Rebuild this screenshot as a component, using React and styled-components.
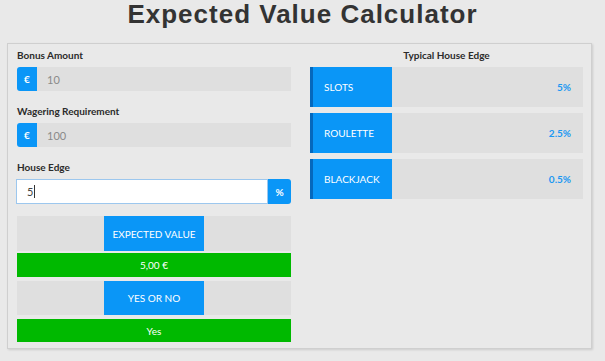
import styled, { createGlobalStyle } from "styled-components";

const GlobalStyle = createGlobalStyle`
  html, body {
    margin: 0;
    padding: 0;
    background: #e9e9e9;
    font-family: Lato, "Open Sans", sans-serif;
  }
`;

const Page = styled.div`
  width: 605px;
  height: 361px;
  overflow: hidden;
`;

const Title = styled.h1`
  margin: 0;
  height: 38px;
  line-height: 29px;
  text-align: center;
  font-family: "Liberation Sans", Arial, sans-serif;
  font-size: 26px;
  font-weight: 700;
  letter-spacing: 1px;
  color: #333;
`;

const Panel = styled.div`
  margin: 5px 0 0 7px;
  width: 585px;
  height: 306px;
  box-sizing: border-box;
  border: 1px solid #cfcfcf;
  box-shadow: 1px 1px 2px rgba(0, 0, 0, 0.12);
  padding: 3px 9px 0 9px;
  display: grid;
  grid-template-columns: 274px 273px;
  column-gap: 19px;
  align-items: start;
`;

const Column = styled.div`
  display: flex;
  flex-direction: column;
`;

const Label = styled.div`
  height: 16px;
  line-height: 16px;
  font-size: 10px;
  font-weight: 700;
  color: #2b2b2b;
  margin-bottom: 4px;
  text-align: ${({ $center }) => ($center ? "center" : "left")};
`;

const Field = styled.div`
  margin-bottom: 12px;
`;

const InputGroup = styled.div`
  display: flex;
  height: ${({ $h }) => $h || 24}px;
`;

const Addon = styled.div`
  width: ${({ $w }) => $w || 20}px;
  display: flex;
  align-items: center;
  justify-content: center;
  background: #0a96f7;
  color: #fff;
  font-size: 10px;
  font-weight: 700;
  border-radius: ${({ $right }) => ($right ? "0 3px 3px 0" : "3px 0 0 3px")};
`;

const Input = styled.div`
  flex: 1;
  display: flex;
  align-items: center;
  padding-left: 10px;
  font-size: 11px;
  box-sizing: border-box;
  background: ${({ $active }) => ($active ? "#fff" : "#dfdfdf")};
  border: ${({ $active }) => ($active ? "1px solid #9cc7ee" : "none")};
  margin-left: ${({ $active }) => ($active ? "-1px" : "0")};
  color: ${({ $active }) => ($active ? "#444" : "#8a8a8a")};
`;

const Caret = styled.span`
  display: inline-block;
  width: 1px;
  height: 13px;
  background: #333;
  margin-left: 1px;
`;

const ButtonRow = styled.div`
  display: flex;
  justify-content: center;
  background: #dfdfdf;
  height: ${({ $h }) => $h}px;
  margin-top: ${({ $mt }) => $mt}px;
`;

const Button = styled.div`
  width: 100px;
  display: flex;
  align-items: center;
  justify-content: center;
  background: #0a96f7;
  color: #fff;
  font-size: 10px;
  text-transform: uppercase;
`;

const Result = styled.div`
  display: flex;
  align-items: center;
  justify-content: center;
  background: #00b900;
  color: #fff;
  font-size: 10px;
  height: ${({ $h }) => $h}px;
  margin-top: ${({ $mt }) => $mt}px;
`;

const EdgeList = styled.div`
  display: flex;
  flex-direction: column;
  gap: 6px;
`;

const EdgeRow = styled.div`
  display: flex;
  height: 40px;
  background: #dfdfdf;
`;

const EdgeName = styled.div`
  width: 82px;
  display: flex;
  align-items: center;
  padding-left: 11px;
  box-sizing: border-box;
  background: #0a96f7;
  border-left: 3px solid #0568bd;
  color: #fff;
  font-size: 10px;
`;

const EdgeValue = styled.div`
  flex: 1;
  display: flex;
  align-items: center;
  justify-content: flex-end;
  padding-right: 12px;
  color: #1b98f2;
  font-size: 10px;
  font-weight: 700;
`;

const edges = [
  { name: "SLOTS", value: "5%" },
  { name: "ROULETTE", value: "2.5%" },
  { name: "BLACKJACK", value: "0.5%" },
];

const App = () => {
  return (
    <Page>
      <GlobalStyle />
      <Title>Expected Value Calculator</Title>
      <Panel>
        <Column>
          <Field>
            <Label>Bonus Amount</Label>
            <InputGroup>
              <Addon>€</Addon>
              <Input>10</Input>
            </InputGroup>
          </Field>
          <Field>
            <Label>Wagering Requirement</Label>
            <InputGroup>
              <Addon>€</Addon>
              <Input>100</Input>
            </InputGroup>
          </Field>
          <Field>
            <Label>House Edge</Label>
            <InputGroup $h={25}>
              <Input $active>
                5<Caret />
              </Input>
              <Addon $right $w={23}>%</Addon>
            </InputGroup>
          </Field>
          <ButtonRow $h={35} $mt={0}>
            <Button>Expected Value</Button>
          </ButtonRow>
          <Result $h={24} $mt={2}>5,00 €</Result>
          <ButtonRow $h={34} $mt={4}>
            <Button>Yes or No</Button>
          </ButtonRow>
          <Result $h={23} $mt={4}>Yes</Result>
        </Column>
        <Column>
          <Label $center>Typical House Edge</Label>
          <EdgeList>
            {edges.map((e) => (
              <EdgeRow key={e.name}>
                <EdgeName>{e.name}</EdgeName>
                <EdgeValue>{e.value}</EdgeValue>
              </EdgeRow>
            ))}
          </EdgeList>
        </Column>
      </Panel>
    </Page>
  );
};

export default App;
